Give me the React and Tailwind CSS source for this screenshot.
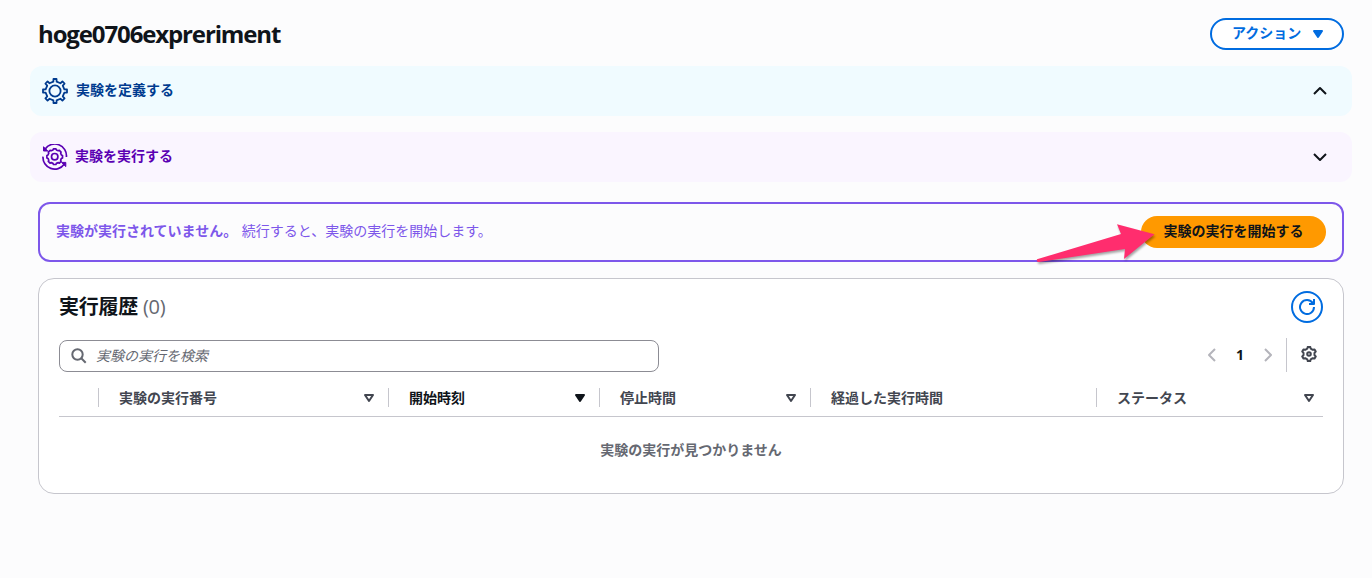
import React, { useState } from 'react'

const COLUMNS = [
  { id: 'select', label: '', width: 'w-[40px]' },
  { id: 'number', label: '実験の実行番号', width: 'w-[290px]', sortable: true },
  { id: 'start', label: '開始時刻', width: 'w-[211px]', sortable: true },
  { id: 'stop', label: '停止時間', width: 'w-[211px]', sortable: true },
  { id: 'elapsed', label: '経過した実行時間', width: 'w-[286px]' },
  { id: 'status', label: 'ステータス', width: 'flex-1', sortable: true },
]

// Gear outline around (c, c), top/base are half tooth widths as a share of one step
const gearPath = (c, outer, inner, teeth, top, base) => {
  const step = (Math.PI * 2) / teeth
  const pt = (r, a) => `${(c + r * Math.sin(a)).toFixed(2)} ${(c - r * Math.cos(a)).toFixed(2)}`
  const parts = []
  for (let i = 0; i < teeth; i++) {
    const a = i * step
    parts.push(`${pt(inner, a - base * step)} L${pt(outer, a - top * step)} L${pt(outer, a + top * step)} L${pt(inner, a + base * step)}`)
  }
  return `M${parts.join(' L')} Z`
}

const GearIcon = () => (
  <svg width="26" height="26" viewBox="0 0 26 26" fill="none" stroke="currentColor" strokeWidth="1.8" strokeLinejoin="round">
    <path d={gearPath(13, 12.1, 9.5, 8, 0.16, 0.22)} />
    <circle cx="13" cy="13" r="5.6" />
  </svg>
)

const RunIcon = () => (
  <svg width="26" height="26" viewBox="0 0 26 26" fill="none" stroke="currentColor" strokeWidth="1.7" strokeLinejoin="round">
    <path d={gearPath(12.7, 7.9, 6.9, 8, 0.2, 0.32)} />
    <circle cx="12.7" cy="12.7" r="3.2" />
    <path d="M3.2 5A11.7 11.7 0 0 1 24.4 13" />
    <path d="M1 12.6A11.7 11.7 0 0 0 22.2 20.2" />
    <path d="M1.5 2.8V7H5.8Z" fill="currentColor" strokeWidth="1" />
    <path d="M23.8 22.6V18.4H19.5Z" fill="currentColor" strokeWidth="1" />
  </svg>
)

const Caret = ({ filled }) => (
  <svg width="16" height="16" viewBox="0 0 16 16" fill={filled ? 'currentColor' : 'none'} stroke="currentColor" strokeWidth="2" strokeLinejoin="round">
    <path d="M4 5h8l-4 6-4-6Z" />
  </svg>
)

const Angle = ({ d }) => (
  <svg width="16" height="16" viewBox="0 0 16 16" fill="none" stroke="currentColor" strokeWidth="2" strokeLinejoin="round">
    <path d={d} />
  </svg>
)

const Pointer = () => (
  <svg className="pointer-events-none absolute top-[16px] right-[184px] drop-shadow-[1px_2px_1px_rgba(0,0,0,0.35)]" width="126" height="44" viewBox="0 0 126 44">
    <path d="M122.5 14.3 85 4.3 89 14 5 39.3Q4 42.3 7 42L93 29 92 39Z" fill="#ff2d6e" />
  </svg>
)

function Section({ icon, title, className, open }) {
  const [expanded, setExpanded] = useState(open)
  return (
    <button
      onClick={() => setExpanded(!expanded)}
      className={`flex h-[50px] w-full items-center rounded-xl pl-3 pr-6 font-bold ${className}`}
    >
      {icon}
      <span className="pb-0.5">{title}</span>
      <span className="ml-auto text-[#0f141a]">
        <Angle d={expanded ? 'M2 11 8 5l6 6' : 'm2 5 6 6 6-6'} />
      </span>
    </button>
  )
}

export default function App() {
  return (
    <div lang="ja" className="h-[578px] bg-[#fcfcfd] pt-[18px] text-sm leading-5 text-[#0f141a] font-['Open_Sans','Noto_Sans_CJK_JP',sans-serif]">
      <header className="flex h-8 items-center justify-between pl-[38px] pr-7">
        <h1 className="text-2xl font-bold tracking-[-1.13px]">hoge0706expreriment</h1>
        <button className="flex h-8 w-[134px] items-center gap-[9px] rounded-full border-2 border-[#006ce0] bg-white pl-5 font-bold text-[#006ce0]">
          <span className="pb-0.5">アクション</span>
          <Caret filled />
        </button>
      </header>

      <div className="mt-4 flex flex-col gap-4 pl-[30px] pr-5">
        <Section
          open
          icon={<span className="mr-2 pb-px"><GearIcon /></span>}
          title="実験を定義する"
          className="bg-[#f0fbff] text-[#003b8f]"
        />
        <Section
          icon={<span className="mr-[7px]"><RunIcon /></span>}
          title="実験を実行する"
          className="bg-[#faf5ff] text-[#5a00b3]"
        />
      </div>

      <div className="relative ml-[38px] mr-7 mt-5 flex h-[60px] items-center justify-between rounded-xl border-2 border-[#7d57ea] pl-4 pr-4 text-[#7d57ea]">
        <p className="pb-0.5">
          <b className="mr-px">実験が実行されていません。</b> 続行すると、実験の実行を開始します。
        </p>
        <button className="h-8 w-[185px] rounded-full bg-[#ff9900] pb-0.5 font-bold text-[#0f141a]">実験の実行を開始する</button>
        <Pointer />
      </div>

      <section className="ml-[38px] mr-7 mt-4 h-[216px] rounded-2xl border border-[#c6c6cd] bg-white px-5 pt-3">
        <div className="flex h-8 items-center justify-between">
          <h2 className="text-xl font-bold leading-6 tracking-[-0.25px]">
            実行履歴 <span className="font-medium text-[#656871] tracking-[-0.3px]">(0)</span>
          </h2>
          <button className="flex size-8 items-center justify-center rounded-full border-2 border-[#006ce0] text-[#006ce0]">
            <svg width="16" height="16" viewBox="0 0 16 16" fill="none" stroke="currentColor" strokeWidth="2" strokeLinejoin="round">
              <path d="M10 5h5V0" />
              <path d="M15 8a7 7 0 1 1-1.2-3.9L15 5" />
            </svg>
          </button>
        </div>

        <div className="mt-[17px] flex h-8 items-center justify-between">
          <div className="flex h-8 w-[600px] items-center gap-[9px] rounded-lg border border-[#8c8c94] pl-[11px] text-[#656871]">
            <svg width="16" height="16" viewBox="0 0 16 16" fill="none" stroke="currentColor" strokeWidth="2">
              <circle cx="6.5" cy="6.5" r="5.2" />
              <path d="m14.7 14.7-4.4-4.4" />
            </svg>
            <input className="flex-1 italic outline-none placeholder:text-[#656871]" placeholder="実験の実行を検索" />
          </div>
          <div className="flex h-[34px] items-center pb-[2px]">
            <span className="text-[#b4b4bb]"><Angle d="M11 2 5 8l6 6" /></span>
            <span className="w-10 text-center font-bold">1</span>
            <span className="text-[#b4b4bb]"><Angle d="m5 2 6 6-6 6" /></span>
            <span className="ml-2.5 h-[34px] w-px bg-[#c6c6cd]" />
            <svg className="ml-3.5 mr-1.5 mb-0.5 text-[#424650]" width="16" height="16" viewBox="0 0 16 16" fill="none" stroke="currentColor" strokeWidth="2" strokeLinejoin="round">
              <path d={gearPath(8, 7.2, 5.6, 6, 0.16, 0.3)} />
              <circle cx="8" cy="8" r="1.8" />
            </svg>
          </div>
        </div>

        <div className="mt-[7px] flex h-[38px] items-center border-b border-[#c6c6cd]">
          {COLUMNS.map((col, i) => {
            const sorted = col.id === 'start'
            const last = i === COLUMNS.length - 1
            return (
              <div
                key={col.id}
                className={`flex h-[19px] items-center justify-between pl-5 ${last ? 'pr-[6px]' : 'border-r border-[#c6c6cd] pr-[11px]'} font-bold ${sorted ? 'text-[#0f141a]' : 'text-[#424650]'} ${col.width}`}
              >
                {col.label}
                {col.sortable && <Caret filled={sorted} />}
              </div>
            )
          })}
        </div>
        <p className="mt-[23px] text-center font-bold text-[#656871]">実験の実行が見つかりません</p>
      </section>
    </div>
  )
}
